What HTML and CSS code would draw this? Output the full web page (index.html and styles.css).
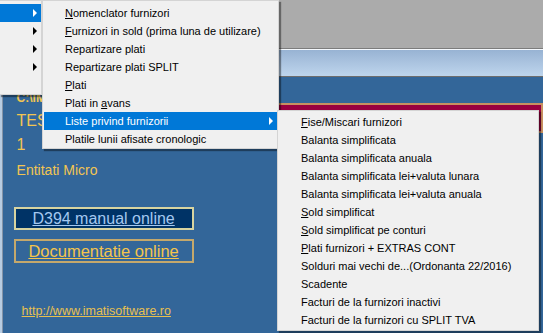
FILE: index.html
```html
<!DOCTYPE html>
<html lang="ro">
<head>
    <meta charset="UTF-8">
    <title>Furnizori</title>
    <link rel="stylesheet" href="styles.css">
</head>
<body>
    <div class="top"></div>
    <div class="band"></div>
    <div class="main">
        <div class="strip"></div>
        <div class="info">
            <div class="path">C:\IMATI</div>
            <div class="firm">TEST SRL</div>
            <div class="firm">1</div>
            <div class="entity">Entitati Micro</div>
            <a class="btn btn-manual" href="#">D394 manual online</a>
            <a class="btn btn-doc" href="#">Documentatie online</a>
            <a class="site" href="#">http://www.imatisoftware.ro</a>
        </div>
        <div class="side">
            <div class="badge">BALANTA</div>
        </div>
    </div>

    <!-- open menus -->
    <div class="menu menu-root">
        <div class="item active"><span class="arrow"></span></div>
        <div class="item"><span class="arrow"></span></div>
        <div class="item"><span class="arrow"></span></div>
        <div class="item"><span class="arrow"></span></div>
        <div class="item"></div>
    </div>

    <div class="menu menu-furn">
        <div class="item"><span><u>N</u>omenclator furnizori</span></div>
        <div class="item"><span><u>F</u>urnizori in sold (prima luna de utilizare)</span></div>
        <div class="item"><span>Repartizare plati</span></div>
        <div class="item"><span>Repartizare plati SPLIT</span></div>
        <div class="item"><span><u>P</u>lati</span></div>
        <div class="item"><span>Plati in <u>a</u>vans</span></div>
        <div class="item active"><span>Liste privind furnizorii</span><span class="arrow"></span></div>
        <div class="item"><span>Platile lunii afisate cronologic</span></div>
    </div>

    <div class="menu menu-liste">
        <div class="item"><span><u>F</u>ise/Miscari furnizori</span></div>
        <div class="item"><span>Balanta simplificata</span></div>
        <div class="item"><span>Balanta simplificata anuala</span></div>
        <div class="item"><span>Balanta simplificata lei+valuta lunara</span></div>
        <div class="item"><span>Balanta simplificata lei+valuta anuala</span></div>
        <div class="item"><span><u>S</u>old simplificat</span></div>
        <div class="item"><span><u>S</u>old simplificat pe conturi</span></div>
        <div class="item"><span><u>P</u>lati furnizori + EXTRAS CONT</span></div>
        <div class="item"><span>Solduri mai vechi de...(Ordonanta 22/2016)</span></div>
        <div class="item"><span>Scadente</span></div>
        <div class="item"><span>Facturi de la furnizori inactivi</span></div>
        <div class="item"><span>Facturi de la furnizori cu SPLIT TVA</span></div>
    </div>
</body>
</html>
```

FILE: styles.css
```css
body {
    margin: 0;
    width: 543px;
    height: 333px;
    overflow: hidden;
    position: relative;
    background: #336699;
    font-family: "Liberation Sans", Arial, sans-serif;
}

.top {
    height: 48px;
    background: #ababab;
    border-bottom: 1px solid #7c7c7c;
}

.band {
    height: 26px;
    border-top: 1px solid #f4f8fc;
    border-bottom: 1px solid #6e6e6e;
    background: linear-gradient(#98b3d3, #bed5ed);
}

.main {
    display: flex;
    height: 256px;
}

.strip {
    width: 3px;
    background: #b8cce2;
    border-right: 1px solid #8494a8;
}

.info {
    width: 369px;
    box-sizing: border-box;
    padding-left: 11px;
    display: flex;
    flex-direction: column;
    align-items: flex-start;
    color: #f2c552;
}

.path {
    margin: 14px 0 0 3px;
    font-size: 12px;
    font-weight: bold;
    line-height: 14px;
    white-space: nowrap;
}

.firm {
    margin-left: 3px;
    font-size: 16px;
    line-height: 24px;
}

.path + .firm {
    margin-top: 4px;
}

.entity {
    margin: 1px 0 0 3px;
    font-size: 14px;
    line-height: 24px;
}

.btn {
    width: 180px;
    height: 23px;
    box-sizing: border-box;
    display: flex;
    align-items: center;
    justify-content: center;
    font-size: 16px;
    text-decoration: underline;
}

.btn-manual {
    margin-top: 25px;
    background: #003366;
    border: 2px solid #d8d4a0;
    color: #a4c8f0;
}

.btn-doc {
    margin-top: 9px;
    height: 24px;
    border: 2px solid #c4a86c;
    color: #f4c44c;
    font-size: 16.5px;
}

.site {
    margin: 41px 0 0 8px;
    font-size: 12.5px;
    line-height: 14px;
    color: #e8c050;
    text-decoration: underline;
}

.side {
    padding-top: 26px;
}

.badge {
    width: 340px;
    height: 30px;
    box-sizing: border-box;
    padding: 6px 0 0 164px;
    background: #990040;
    border: 2px solid #c89060;
    color: #fff;
    font-size: 14px;
    font-weight: bold;
}

/* menus */

.menu {
    position: absolute;
    top: 0;
    background: #f0f0f0;
    border: 1px solid #d4d4d4;
    box-shadow: 2px 2px 1px rgba(0, 0, 0, 0.4);
    font-size: 11px;
    color: #000;
}

.menu-root {
    left: -1px;
    width: 41px;
    padding-top: 3px;
}

.menu-furn {
    left: 42px;
    width: 234px;
    padding: 3px 0 0 1px;
}

.menu-liste {
    left: 277px;
    top: 110px;
    width: 259px;
    padding: 2px 0 1px 1px;
}

.item {
    height: 18px;
    display: flex;
    align-items: center;
    padding-left: 21px;
    white-space: nowrap;
}

.menu-root .item {
    padding-left: 0;
}

.menu-liste .item {
    padding-left: 22px;
}

.item.active {
    background: #0078d7;
    color: #fff;
}

.arrow {
    margin-left: auto;
    margin-right: 5px;
    width: 0;
    height: 0;
    border-left: 4px solid #000;
    border-top: 4px solid transparent;
    border-bottom: 4px solid transparent;
}

.menu-root .arrow {
    margin-right: 4px;
}

.active .arrow {
    border-left-color: #fff;
}
```
